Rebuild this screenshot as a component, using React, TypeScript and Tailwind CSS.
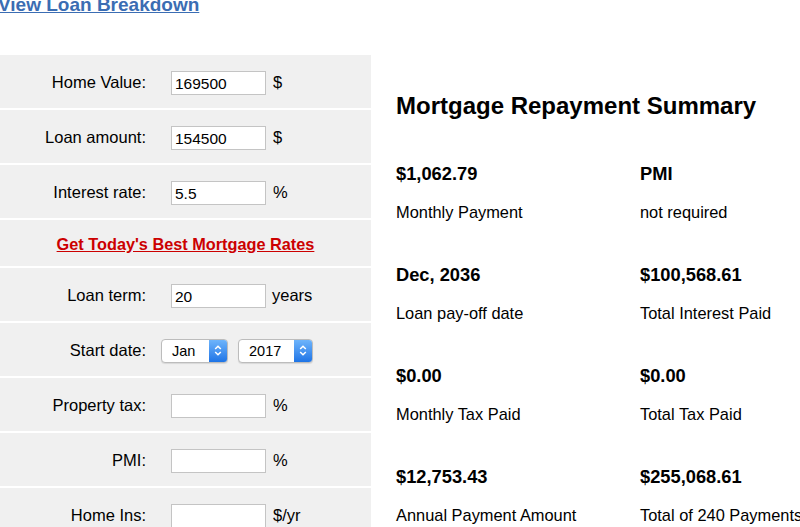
import { useState } from "react"

type Field = { label: string; value: string; unit: string }

const topFields: Field[] = [
  { label: "Home Value:", value: "169500", unit: "$" },
  { label: "Loan amount:", value: "154500", unit: "$" },
  { label: "Interest rate:", value: "5.5", unit: "%" },
]

const bottomFields: Field[] = [
  { label: "Property tax:", value: "", unit: "%" },
  { label: "PMI:", value: "", unit: "%" },
  { label: "Home Ins:", value: "", unit: "$/yr" },
]

const summary = [
  { value: "$1,062.79", label: "Monthly Payment" },
  { value: "PMI", label: "not required" },
  { value: "Dec, 2036", label: "Loan pay-off date" },
  { value: "$100,568.61", label: "Total Interest Paid" },
  { value: "$0.00", label: "Monthly Tax Paid" },
  { value: "$0.00", label: "Total Tax Paid" },
  { value: "$12,753.43", label: "Annual Payment Amount" },
  { value: "$255,068.61", label: "Total of 240 Payments" },
]

function InputRow({ field }: { field: Field }) {
  const [value, setValue] = useState(field.value)
  return (
    <div className="flex h-[55px] items-center border-b-2 border-white pt-[2px]">
      <label className="w-[146px] text-right text-[16.5px]">{field.label}</label>
      <input
        className="ml-[25px] h-[24px] w-[95px] border border-[#c4c4c4] bg-white px-[3px] pt-[2px] text-[15.5px] text-black outline-none"
        value={value}
        onChange={e => setValue(e.target.value)}
      />
      <span className="ml-[7px] text-[16.5px]">{field.unit}</span>
    </div>
  )
}

function MacSelect({ value, className }: { value: string; className: string }) {
  return (
    <div className={"flex h-[24px] items-stretch rounded-[4px] border border-[#bcbcbc] bg-white shadow-[0_1px_1px_rgba(0,0,0,0.1)] " + className}>
      <span className="flex-1 pl-[10px] text-[14.5px] leading-[22px]">{value}</span>
      <span className="flex w-[18px] items-center justify-center rounded-r-[3px] bg-linear-to-b from-[#6db4fb] to-[#1d74e6]">
        <svg width="8" height="13" viewBox="0 0 8 13">
          <path d="M1.2 5 L4 2.2 L6.8 5 M1.2 8 L4 10.8 L6.8 8" stroke="white" strokeWidth="1.5" fill="none" />
        </svg>
      </span>
    </div>
  )
}

export default function App() {
  const [term, setTerm] = useState("20")

  return (
    <div className="h-[527px] w-[800px] overflow-hidden bg-white text-black [font-family:'Liberation_Sans',Arial,sans-serif]">
      <div className="h-[55px] overflow-hidden">
        <div className="-ml-[2px] -mt-[5px] leading-none">
          <a href="#" className="text-[19px] font-bold text-[#3b6db3] underline">View Loan Breakdown</a>
        </div>
      </div>

      <div className="flex">
        <div className="w-[371px] shrink-0 bg-[#f0f0f0]">
          {topFields.map(f => <InputRow key={f.label} field={f} />)}

          <div className="flex h-[48px] items-center justify-center border-b-2 border-white pt-[2px]">
            <a href="#" className="text-[16.3px] font-bold text-[#cc0000] underline">Get Today's Best Mortgage Rates</a>
          </div>

          <div className="flex h-[55px] items-center border-b-2 border-white pt-[2px]">
            <label className="w-[146px] text-right text-[16.5px]">Loan term:</label>
            <input
              className="ml-[25px] h-[24px] w-[95px] border border-[#c4c4c4] bg-white px-[3px] pt-[2px] text-[15.5px] outline-none"
              value={term}
              onChange={e => setTerm(e.target.value)}
            />
            <span className="ml-[6px] text-[16.5px]">years</span>
          </div>

          <div className="flex h-[55px] items-center border-b-2 border-white pt-[2px]">
            <label className="w-[146px] text-right text-[16.5px]">Start date:</label>
            <MacSelect value="Jan" className="ml-[15px] w-[67px]" />
            <MacSelect value="2017" className="ml-[10px] w-[75px]" />
          </div>

          {bottomFields.map(f => <InputRow key={f.label} field={f} />)}
        </div>

        <div className="min-w-0 flex-1 pl-[25px] pt-[39px]">
          <h2 className="whitespace-nowrap text-[24px] font-bold leading-none">Mortgage Repayment Summary</h2>
          <div className="mt-[47px] grid grid-cols-[244px_1fr] gap-y-[45px]">
            {summary.map((s, i) => (
              <div key={i} className="whitespace-nowrap">
                <div className="text-[18.3px] font-bold leading-[18px]">{s.value}</div>
                <div className="mt-[21px] text-[16.4px] leading-[17px]">{s.label}</div>
              </div>
            ))}
          </div>
        </div>
      </div>
    </div>
  )
}
